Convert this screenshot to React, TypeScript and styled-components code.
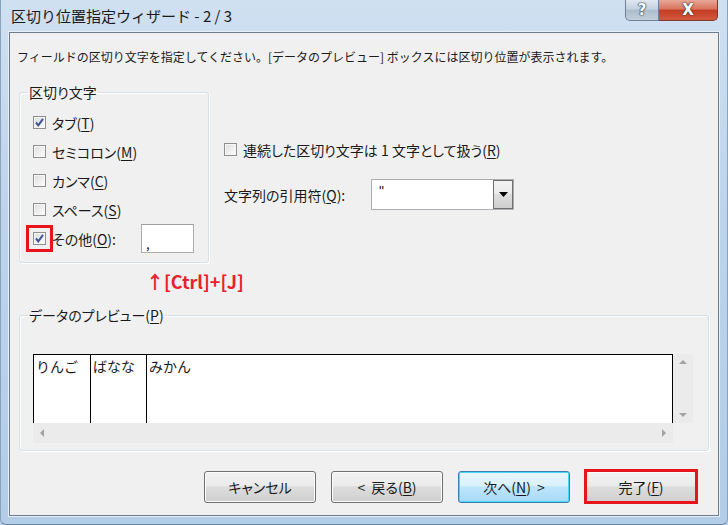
import React from "react";
import styled, { createGlobalStyle } from "styled-components";

const GlobalStyle = createGlobalStyle`
  html, body {
    margin: 0;
    padding: 0;
    background: #b8cfe8;
  }
  body {
    font-family: "Noto Sans CJK JP", "Noto Sans", sans-serif;
    font-feature-settings: "palt";
    color: #1a1a1a;
  }
`;

const Window = styled.div`
  width: 728px;
  height: 525px;
  box-sizing: border-box;
  display: flex;
  flex-direction: column;
  padding: 0 8px 8px;
  background: linear-gradient(180deg, #cfe0f1 0%, #bdd4ec 40%, #b3cce7 100%);
  border-left: 1px solid #8aa3bd;
  border-right: 1px solid #8aa3bd;
  border-bottom: 1px solid #6f87a1;
  border-radius: 0 0 6px 6px;
`;

const TitleBar = styled.div`
  height: 32px;
  display: flex;
  justify-content: space-between;
  align-items: flex-start;
  margin: 0 -8px 0 -7px;
`;

const Title = styled.div`
  font-size: 15px;
  font-feature-settings: normal;
  line-height: 32px;
  padding-left: 9px;
  color: #1b1b1b;
`;

const Captions = styled.div`
  display: flex;
  margin-right: 9px;
`;

const CaptionButton = styled.div<{ $close?: boolean }>`
  width: ${(p) => (p.$close ? 59 : 34)}px;
  height: 21px;
  box-sizing: border-box;
  display: flex;
  align-items: center;
  justify-content: center;
  border: 1px solid ${(p) => (p.$close ? "#7a3a30" : "#6f8198")};
  border-top: none;
  ${(p) => (p.$close ? "border-left: none;" : "")}
  border-radius: ${(p) => (p.$close ? "0 0 5px 0" : "0 0 0 5px")};
  background: ${(p) =>
    p.$close
      ? "linear-gradient(180deg, #e9a899 0%, #d9725d 45%, #c43d23 52%, #d4583c 100%)"
      : "linear-gradient(180deg, #e0e8f1 0%, #c3d0de 45%, #aebdcd 52%, #c1cedb 100%)"};
  color: #fff;
  font-family: "DejaVu Sans", sans-serif;
  font-weight: bold;
  font-size: 15px;
  text-shadow: 0 0 1px #333, 0 0 1px #333, 0 0 2px #444;
`;

const Client = styled.div`
  flex: 1;
  display: flex;
  flex-direction: column;
  background: #f0f0f0;
  border: 1px solid #6e7d8d;
  box-shadow: 0 0 0 1px #e6eff8;
  font-size: 14px;
`;

const Instruction = styled.div`
  font-size: 12px;
  font-feature-settings: normal;
  line-height: 18px;
  margin: 15px 0 0 7px;
`;

const TopSection = styled.div`
  display: flex;
  margin-top: 17px;
`;

const Group = styled.fieldset<{ $w: number }>`
  width: ${(p) => p.$w}px;
  box-sizing: border-box;
  margin: 0 0 0 9px;
  min-width: 0;
  border: 1px solid #d5dfe5;
  border-radius: 3px;
  box-shadow: inset 1px 1px 0 #fff, 1px 1px 0 #fff;
  padding: 7px 12px 9px 13px;
`;

const Legend = styled.legend`
  font-size: 14px;
  line-height: 18px;
  padding: 0 1px;
  margin-left: -5px;
`;

const Row = styled.div`
  height: 29px;
  display: flex;
  align-items: center;
  gap: 6px;
  white-space: nowrap;
`;

const Box = styled.span<{ $marked?: boolean }>`
  width: 13px;
  height: 13px;
  flex: none;
  box-sizing: border-box;
  border: 1px solid #8e8f8f;
  background: linear-gradient(135deg, #dcdcdc 0%, #f4f4f4 70%, #fefefe 100%);
  box-shadow: inset 0 0 0 1px #f6f6f6;
  display: flex;
  align-items: center;
  justify-content: center;
  ${(p) => (p.$marked ? "outline: 3px solid #e8141c; outline-offset: 4px;" : "")}
`;

const U = styled.span`
  text-decoration: underline;
  text-underline-offset: 2px;
`;

const TextField = styled.div`
  width: 53px;
  height: 29px;
  box-sizing: border-box;
  margin-left: 19px;
  border: 1px solid #abadb3;
  border-top-color: #a0a0a0;
  background: #fff;
  font-size: 13px;
  line-height: 12px;
  padding: 13px 0 0 4px;
`;

const RightColumn = styled.div`
  display: flex;
  flex-direction: column;
  margin-left: 15px;
  padding-top: 52px;
`;

const ComboRow = styled.div`
  display: flex;
  align-items: center;
  margin-top: 15px;
`;

const ComboLabel = styled.span`
  width: 147px;
`;

const Combo = styled.div`
  width: 143px;
  height: 31px;
  box-sizing: border-box;
  display: flex;
  border: 1px solid #abadb3;
  background: #fff;
`;

const ComboValue = styled.span`
  flex: 1;
  padding: 3px 0 0 7px;
  font-family: "Liberation Sans", sans-serif;
  font-size: 14px;
`;

const DropButton = styled.span`
  width: 20px;
  box-sizing: border-box;
  border: 1px solid #707070;
  background: linear-gradient(180deg, #f2f2f2 0%, #ebebeb 45%, #dddddd 50%, #cfcfcf 100%);
  display: flex;
  align-items: center;
  justify-content: center;
`;

const Hint = styled.div`
  margin: 8px 0 0 136px;
  line-height: 20px;
  font-size: 18px;
  font-weight: bold;
  color: #e8202a;
`;

const PreviewGroup = styled(Group)`
  margin-top: 15px;
  padding: 30px 15px 7px 13px;
`;

const PreviewGrid = styled.div`
  display: grid;
  grid-template-columns: 640px 20px;
  grid-template-rows: 69px 20px;
`;

const Sheet = styled.div`
  background: #fff;
  border: 1px solid #000;
  border-bottom: none;
  display: flex;
  font-feature-settings: normal;
  font-size: 14px;
  line-height: 20px;
`;

const Col = styled.div<{ $w?: number }>`
  ${(p) => (p.$w ? `width: ${p.$w}px; border-right: 1px solid #000;` : "flex: 1;")}
  box-sizing: border-box;
  padding: 1px 0 0 2px;
`;

const Scroll = styled.div<{ $vertical?: boolean }>`
  background: #ebebeb;
  display: flex;
  flex-direction: ${(p) => (p.$vertical ? "column" : "row")};
  justify-content: space-between;
  align-items: center;
  padding: ${(p) => (p.$vertical ? "5px 0" : "0 6px")};
`;

const Corner = styled.div`
  background: #f0f0f0;
`;

const ButtonRow = styled.div`
  display: flex;
  justify-content: flex-end;
  gap: 15px;
  margin-top: 20px;
  padding: 0 21px 12px 0;
`;

const Button = styled.div<{ $default?: boolean; $marked?: boolean }>`
  position: relative;
  width: 112px;
  height: 32px;
  box-sizing: border-box;
  display: flex;
  align-items: center;
  justify-content: center;
  white-space: pre;
  border: 1px solid ${(p) => (p.$default ? "#3c7fb1" : "#707070")};
  border-radius: 3px;
  background: ${(p) =>
    p.$default
      ? "linear-gradient(180deg, #eaf6fd 0%, #d9f0fc 45%, #bee6fd 50%, #a7d9f5 100%)"
      : "linear-gradient(180deg, #f2f2f2 0%, #ebebeb 45%, #dddddd 50%, #cfcfcf 100%)"};
  box-shadow: inset 0 0 0 1px ${(p) => (p.$default ? "#48d8f7" : "#fcfcfc")};
  font-size: 14px;
  word-spacing: 3px;
  ${(p) =>
    p.$marked
      ? `&::after {
          content: "";
          position: absolute;
          inset: -3px -2px -2px -2px;
          border: 3px solid #e8141c;
        }`
      : ""}
`;

function Check({ checked, marked }: { checked?: boolean; marked?: boolean }) {
  return (
    <Box $marked={marked}>
      {checked && (
        <svg width="11" height="11" viewBox="0 0 11 11">
          <path d="M2 5.5 L4.3 8.3 L9 1.8" fill="none" stroke="#3d5597" strokeWidth="2" />
        </svg>
      )}
    </Box>
  );
}

const Arrow = ({ dir }: { dir: "up" | "down" | "left" | "right" }) => {
  const pts = {
    up: "0,5 4,1 8,5",
    down: "0,1 4,5 8,1",
    left: "5,0 1,4 5,8",
    right: "1,0 5,4 1,8",
  }[dir];
  const w = dir === "up" || dir === "down" ? 8 : 6;
  const h = dir === "up" || dir === "down" ? 6 : 8;
  return (
    <svg width={w} height={h} viewBox={`0 0 ${w} ${h}`}>
      <polygon points={pts} fill="#a3a3a3" />
    </svg>
  );
};

const delimiters = [
  { label: "タブ", key: "T", checked: true },
  { label: "セミコロン", key: "M" },
  { label: "カンマ", key: "C" },
  { label: "スペース", key: "S" },
];

export default function App() {
  return (
    <>
      <GlobalStyle />
      <Window>
        <TitleBar>
          <Title>区切り位置指定ウィザード - 2 / 3</Title>
          <Captions>
            <CaptionButton>?</CaptionButton>
            <CaptionButton $close>X</CaptionButton>
          </Captions>
        </TitleBar>
        <Client>
          <Instruction>
            フィールドの区切り文字を指定してください。[データのプレビュー] ボックスには区切り位置が表示されます。
          </Instruction>
          <TopSection>
            <Group $w={190}>
              <Legend>区切り文字</Legend>
              {delimiters.map((d) => (
                <Row key={d.key}>
                  <Check checked={d.checked} />
                  <span>
                    {d.label}(<U>{d.key}</U>)
                  </span>
                </Row>
              ))}
              <Row>
                <Check checked marked />
                <span>
                  その他(<U>O</U>):
                </span>
                <TextField>,</TextField>
              </Row>
            </Group>
            <RightColumn>
              <Row>
                <Check />
                <span>
                  連続した区切り文字は 1 文字として扱う(<U>R</U>)
                </span>
              </Row>
              <ComboRow>
                <ComboLabel>
                  文字列の引用符(<U>Q</U>):
                </ComboLabel>
                <Combo>
                  <ComboValue>"</ComboValue>
                  <DropButton>
                    <svg width="9" height="5" viewBox="0 0 9 5">
                      <polygon points="0,0 9,0 4.5,5" fill="#000" />
                    </svg>
                  </DropButton>
                </Combo>
              </ComboRow>
            </RightColumn>
          </TopSection>
          <Hint>↑[Ctrl]+[J]</Hint>
          <PreviewGroup $w={690}>
            <Legend>
              データのプレビュー(<U>P</U>)
            </Legend>
            <PreviewGrid>
              <Sheet>
                <Col $w={57}>りんご</Col>
                <Col $w={56}>ばなな</Col>
                <Col>みかん</Col>
              </Sheet>
              <Scroll $vertical>
                <Arrow dir="up" />
                <Arrow dir="down" />
              </Scroll>
              <Scroll>
                <Arrow dir="left" />
                <Arrow dir="right" />
              </Scroll>
              <Corner />
            </PreviewGrid>
          </PreviewGroup>
          <ButtonRow>
            <Button>キャンセル</Button>
            <Button>
              &lt; 戻る(<U>B</U>)
            </Button>
            <Button $default>
              次へ(<U>N</U>) &gt;
            </Button>
            <Button $marked>
              完了(<U>F</U>)
            </Button>
          </ButtonRow>
        </Client>
      </Window>
    </>
  );
}
